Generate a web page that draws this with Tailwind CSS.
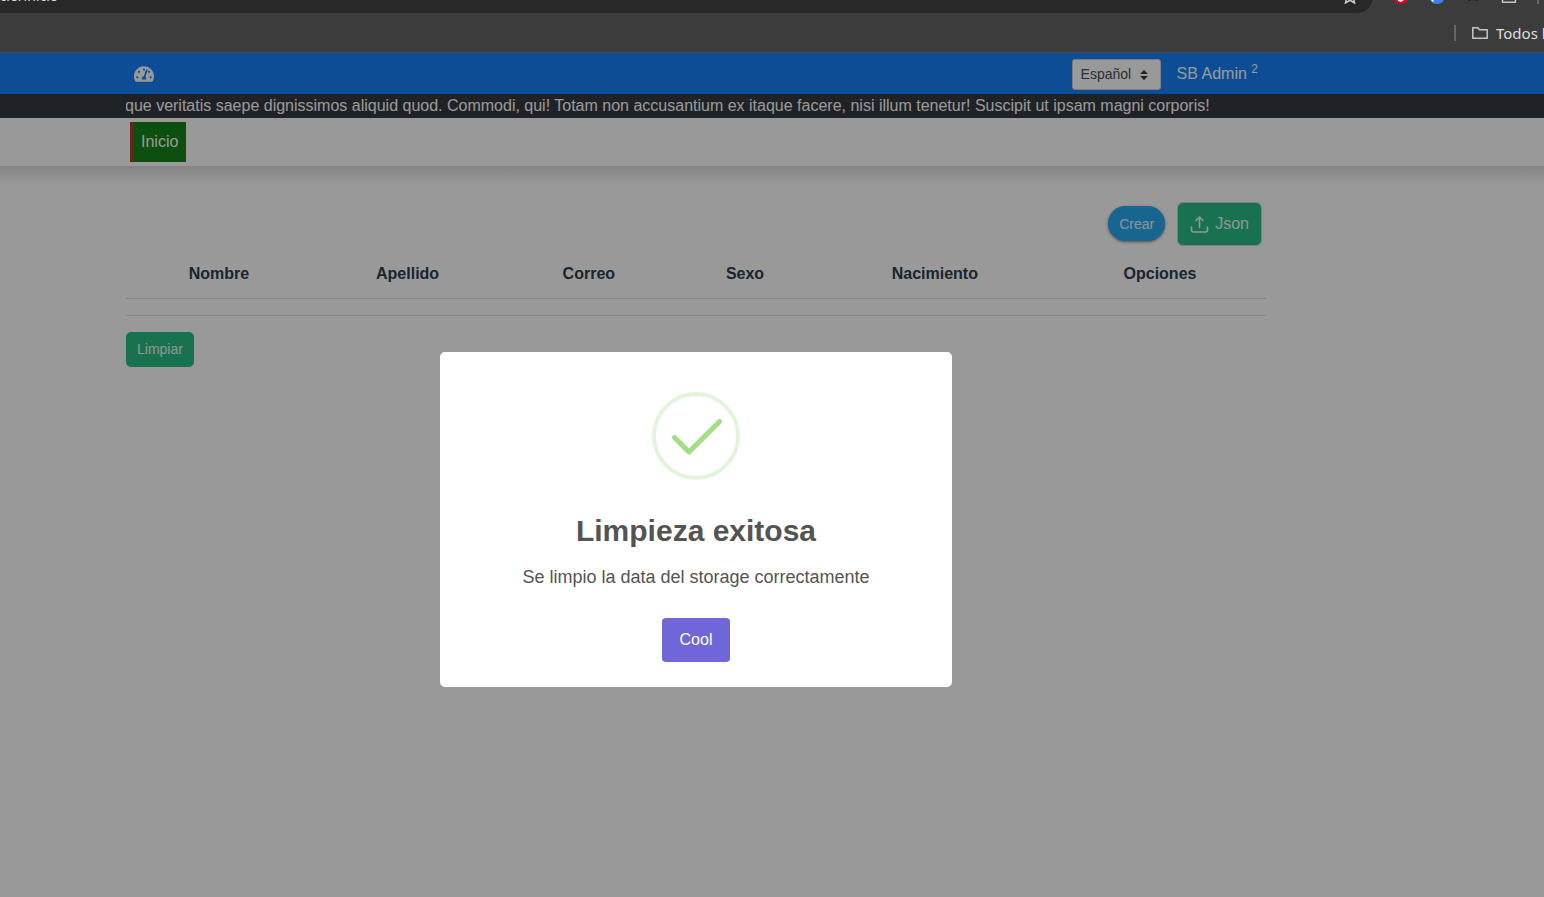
<!DOCTYPE html>
<html lang="es">
<head>
<meta charset="utf-8">
<title>Inicio</title>
<script src="https://cdn.jsdelivr.net/npm/@tailwindcss/browser@4"></script>
</head>
<body class="flex h-screen flex-col overflow-hidden bg-white font-['Liberation_Sans',Arial,sans-serif] text-base text-[#212529]">
<!-- Browser toolbar -->
<header class="relative h-[53px] shrink-0 overflow-hidden border-b border-[#484848] bg-[#3c3c3c] font-['Noto_Sans',sans-serif] text-[#dedede]">
  <div class="flex h-[13px] items-end">
    <div class="flex h-[34px] flex-1 items-center justify-between rounded-br-2xl bg-[#282828] pr-[15px]">
      <span class="-ml-1 text-sm">icio/inicio</span>
      <svg class="h-4 w-4" viewBox="0 0 16 16" fill="none" stroke="#c7c7c7" stroke-width="1.6"><path d="M8 1.5l2 4.4 4.7.5-3.5 3.2 1.300 5.300L8 12.200l-4.500 2.700 1.300-5.300L1.300 6.400 6 5.900z"/></svg>
    </div>
    <div class="flex h-[34px] w-[171px] items-center gap-5 pl-5">
      <svg class="h-4 w-4 shrink-0" viewBox="0 0 16 16"><circle cx="8" cy="8" r="8" fill="#e60023"/><path d="M5 8h6v4l-3 2-3-1z" fill="#fff"/></svg>
      <svg class="h-4 w-4 shrink-0" viewBox="0 0 16 16"><circle cx="8" cy="8" r="8" fill="#3b82f0"/><path d="M3 11l2 2-1 1-2-2z" fill="#fff"/></svg>
      <svg class="h-4 w-4 shrink-0" viewBox="0 0 16 16" fill="#282828"><path d="M3 10h3v3H3zM10 10h3v3h-3z"/></svg>
      <svg class="h-4 w-4 shrink-0" viewBox="0 0 16 16" fill="none" stroke="#c7c7c7" stroke-width="1.500" stroke-linejoin="round"><path d="M1.500 1h13v13.200h-13z"/></svg>
      <span class="h-4 w-0.5 shrink-0 bg-[#666]"></span>
    </div>
  </div>
  <div class="flex h-10 items-center justify-end overflow-hidden">
    <div class="flex w-[90px] shrink-0 items-center gap-4 whitespace-nowrap">
      <span class="h-4 w-0.5 shrink-0 bg-[#666]"></span>
      <a href="#" class="flex items-center gap-2 text-[15px]">
        <svg class="h-4 w-4 shrink-0" viewBox="0 0 16 16" fill="none" stroke="#c7c7c7" stroke-width="1.500" stroke-linejoin="round"><path d="M.8 13.200V2.800h5l1.700 2h7.700v8.400z"/></svg>Todos los marcadores</a>
    </div>
  </div>
</header>

<div class="relative flex-1 overflow-hidden bg-white">
  <!-- Brand bar -->
  <nav class="h-[41px] bg-[#1581fb] pr-[152px]">
    <div class="mx-auto flex h-full max-w-[1140px] items-center justify-between px-2">
      <a href="#" aria-label="Panel">
        <svg class="h-[18px] w-5" viewBox="0 0 576 512" fill="#fff"><path fill-rule="evenodd" d="M288 32C128.940 32 0 160.940 0 320c0 52.800 14.250 102.260 39.060 144.800 5.610 9.620 16.300 15.200 27.440 15.200h443c11.140 0 21.830-5.580 27.440-15.200C561.750 422.260 576 372.800 576 320c0-159.060-128.940-288-288-288zm0 64c14.710 0 26.580 10.130 30.320 23.650-1.110 2.260-2.640 4.230-3.450 6.670l-9.220 27.670c-5.130 3.490-10.970 6.010-17.640 6.010-17.670 0-32-14.330-32-32S270.330 96 288 96zM96 384c-17.670 0-32-14.330-32-32s14.330-32 32-32 32 14.330 32 32-14.330 32-32 32zm48-160c-17.670 0-32-14.330-32-32s14.330-32 32-32 32 14.330 32 32-14.330 32-32 32zm246.770-72.410l-61.330 184C343.130 347.330 352 364.540 352 384c0 11.720-3.380 22.550-8.880 32H232.880c-5.500-9.450-8.880-20.280-8.880-32 0-33.940 26.500-61.430 59.900-63.590l61.340-184.010c4.170-12.560 17.730-19.450 30.360-15.170 12.570 4.190 19.350 17.790 15.170 30.360zM432 224c-16 0-32-14-32-32s14.330-32 32-32 32 14.330 32 32-14.330 32-32 32zm48 160c-17.670 0-32-14.330-32-32s14.330-32 32-32 32 14.330 32 32-14.330 32-32 32z"/></svg>
      </a>
      <div class="flex items-center gap-4">
        <div class="relative mt-0.5">
          <select aria-label="Idioma" class="h-[31px] w-[89px] appearance-none rounded-[3px] border border-[#ced4da] bg-white pb-0.5 pl-2 text-sm text-[#495057]"><option>Español</option></select>
          <svg class="pointer-events-none absolute top-[11px] right-[13px] h-2.5 w-2" viewBox="0 0 4 5" fill="#343a40"><path d="M2 0L0 2h4zm0 5L0 3h4z"/></svg>
        </div>
        <a href="#" class="text-white">SB Admin <sup class="text-xs">2</sup></a>
      </div>
    </div>
  </nav>
  <!-- Scrolling notice -->
  <div class="h-6 bg-[#343a40] pr-[152px]">
    <div class="mx-auto flex max-w-[1140px] overflow-hidden whitespace-nowrap text-white">
      <p class="-ml-px">que veritatis saepe dignissimos aliquid quod. Commodi, qui! Totam non accusantium ex itaque facere, nisi illum tenetur! Suscipit ut ipsam magni corporis!</p>
    </div>
  </div>
  <nav class="h-12 bg-white pr-[152px]">
    <div class="mx-auto flex h-full max-w-[1140px] items-center px-1">
      <a href="#" class="border-l-[3px] border-[#a94436] bg-[#158419] p-2 text-white">Inicio</a>
    </div>
  </nav>

  <main class="bg-linear-to-b from-black/13 to-transparent to-[20px] pr-[152px]">
    <div class="mx-auto max-w-[1140px]">
      <div class="flex items-start justify-end gap-3 pt-9 pr-1">
        <button class="mt-1 h-[35px] rounded-full bg-[#29abee] px-[11px] text-sm text-white/90 shadow-[0_1px_3px_rgba(0,0,0,0.5)]">Crear</button>
        <button class="flex h-11 items-center gap-1.5 rounded-md border border-[#d4d4d4] bg-[#29bf85] px-3 text-white/95">
          <svg class="h-5 w-[19px]" viewBox="0 0 19 20" fill="none" stroke="currentColor" stroke-width="1.600" stroke-linecap="round" stroke-linejoin="round"><path d="M1.500 13v3q0 2 2 2h12q2 0 2-2v-3M9.500 13.500V3.500M6 6.500L9.500 3l3.500 3.500"/></svg>Json</button>
      </div>
      <table class="mt-2 w-full border-b border-[#dee2e6] text-[#2c3e50]">
        <colgroup><col class="w-[16.3%]"><col class="w-[16.8%]"><col class="w-[15%]"><col class="w-[12.4%]"><col class="w-[20.900%]"><col class="w-[18.600%]"></colgroup>
        <thead><tr class="h-11 border-b border-[#dee2e6] align-top"><th scope="col" class="pt-2">Nombre</th><th scope="col" class="pt-2">Apellido</th><th scope="col" class="pt-2">Correo</th><th scope="col" class="pt-2">Sexo</th><th scope="col" class="pt-2">Nacimiento</th><th scope="col" class="pt-2">Opciones</th></tr></thead>
        <tbody><tr class="h-[17px]"><td colspan="6"></td></tr></tbody>
      </table>
      <button class="mt-4 h-[35px] rounded-[5px] bg-[#29bf85] px-[11px] text-sm text-white/90">Limpiar</button>
    </div>
  </main>

  <!-- Success dialog over the dimmed page -->
  <div class="absolute inset-0 flex items-start justify-center bg-black/40 pt-[299px] pr-[152px]">
    <section role="dialog" aria-modal="true" aria-labelledby="dialog-title" class="flex w-full max-w-[512px] flex-col items-center rounded-[5px] bg-white pt-10 pb-[25px] text-[#545454]">
      <svg class="h-[88px] w-[88px]" viewBox="0 0 88 88" fill="none"><circle cx="44" cy="44" r="42" stroke="#e4f4dc" stroke-width="4"/><path d="M22.500 45.500L37 60 67.500 29.500" stroke="#a5dc86" stroke-width="5" stroke-linecap="round" stroke-linejoin="round"/></svg>
      <h2 id="dialog-title" class="mt-[33px] text-3xl font-bold">Limpieza exitosa</h2>
      <p class="mt-[14px] text-lg">Se limpio la data del storage correctamente</p>
      <button class="mt-[27px] h-11 rounded bg-[#7066da] px-[18px] text-white">Cool</button>
    </section>
  </div>
</div>
</body>
</html>
